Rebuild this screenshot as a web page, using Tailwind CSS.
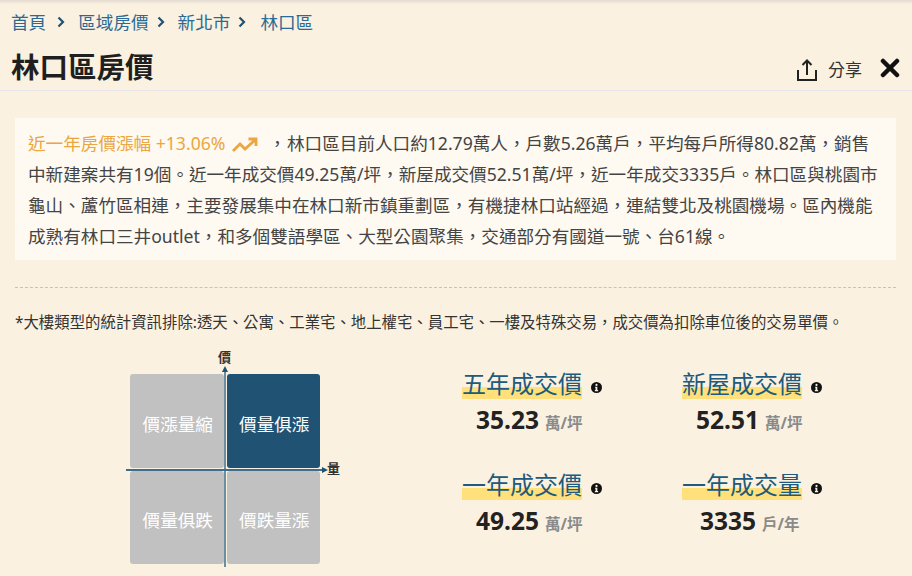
<!DOCTYPE html>
<html lang="zh-Hant">

<head>
    <meta charset="UTF-8">
    <title>林口區房價</title>
    <script src="https://cdn.jsdelivr.net/npm/@tailwindcss/browser@4"></script>
</head>

<body class="bg-[#fbf1e0] font-['Noto_Sans','Noto_Sans_CJK_TC',sans-serif] overflow-hidden">
    <div class="h-[576px] w-[912px] overflow-hidden">
        <!-- top shadow -->
        <div class="h-[4px] bg-gradient-to-b from-[#e2dbd1] to-[#fbf1e0]"></div>

        <!-- breadcrumb -->
        <nav class="flex items-center h-[36px] pl-[11px] text-[17.6px] text-[#2b6a94]">
            <span>首頁</span>
            <svg class="w-[8px] h-[12px] ml-[11px] mr-[13px]" viewBox="0 0 8 12" fill="none" stroke="#1f5273" stroke-width="2.2"><path d="M1.5 1.5 6 6l-4.500 4.500" /></svg>
            <span>區域房價</span>
            <svg class="w-[8px] h-[12px] ml-[8px] mr-[13px]" viewBox="0 0 8 12" fill="none" stroke="#1f5273" stroke-width="2.2"><path d="M1.5 1.5 6 6l-4.500 4.500" /></svg>
            <span>新北市</span>
            <svg class="w-[8px] h-[12px] ml-[8px] mr-[14px]" viewBox="0 0 8 12" fill="none" stroke="#1f5273" stroke-width="2.2"><path d="M1.5 1.5 6 6l-4.500 4.500" /></svg>
            <span>林口區</span>
        </nav>

        <!-- title bar -->
        <header class="flex items-center justify-between h-[51px] pt-[5px] pl-[11px] pr-[12px] border-b border-[#e8e6ec]">
            <h1 class="text-[28.500px] font-bold text-[#1f1f1f]">林口區房價</h1>
            <div class="flex items-center">
                <svg class="w-[22px] h-[24px] mt-[4px]" viewBox="0 0 22 24" fill="none" stroke="#222" stroke-width="2"><path d="M2 12v10h18V12M11 17V2.500M6.500 7 11 2.500 15.500 7" /></svg>
                <span class="ml-[10px] mt-[5px] text-[17px] text-[#333]">分享</span>
                <svg class="w-[20px] h-[20px] ml-[18px]" viewBox="0 0 20 20" fill="none" stroke="#111" stroke-width="4.500" stroke-linecap="round"><path d="M3 3l14 14M17 3 3 17" /></svg>
            </div>
        </header>

        <!-- summary -->
        <section class="mt-[27px] mx-[15px] w-[881px] h-[142px] bg-[#fef9f1] px-[13px] py-[10px] text-[17.6px] leading-[31px] text-[#444]">
            <p><span class="text-[#eaa640]">近一年房價漲幅 +13.06%<svg class="inline-block w-[26px] h-[16px] ml-[7px] mb-[1px] align-middle" viewBox="0 0 26 16" fill="none" stroke="#eaa640" stroke-width="2.800"><path d="M1 14l7-7 5 5 10-9M16.500 2H24v7" /></svg></span><span class="ml-[10px] mr-[1px]">，</span>林口區目前人口約12.79萬人，戶數5.26萬戶，平均每戶所得80.82萬，銷售中新建案共有19個。近一年成交價49.25萬/坪，新屋成交價52.51萬/坪，近一年成交3335戶。林口區與桃園市龜山、蘆竹區相連，主要發展集中在林口新市鎮重劃區，有機捷林口站經過，連結雙北及桃園機場。區內機能成熟有林口三井outlet，和多個雙語學區、大型公園聚集，交通部分有國道一號、台61線。</p>
        </section>

        <hr class="mt-[27px] mx-[15px] w-[881px] border-0 border-t border-dashed border-[#c9c2b6]">

        <p class="mt-[25px] pl-[15px] text-[15.400px] leading-[20px] text-[#333]">*大樓類型的統計資訊排除:透天、公寓、工業宅、地上權宅、員工宅、一樓及特殊交易，成交價為扣除車位後的交易單價。</p>

        <div class="flex mt-[14px]">
            <!-- quadrant chart -->
            <div class="relative w-[400px] h-[230px] shrink-0">
                <span class="absolute left-[218px] top-[2px] text-[13px] leading-[16px] font-bold text-[#333]">價</span>
                <span class="absolute left-[327px] top-[113px] text-[13px] leading-[16px] font-bold text-[#333]">量</span>
                <div class="absolute left-[130px] top-[27px] grid grid-cols-[93.500px_93.500px] grid-rows-[93.500px_93.500px] gap-[3px] text-[17.6px] text-white">
                    <div class="flex items-center justify-center pt-[7px] pl-[2px] rounded-[3px] bg-[#c1c1c1]">價漲量縮</div>
                    <div class="flex items-center justify-center pt-[7px] pl-[2px] rounded-[3px] bg-[#205274]">價量俱漲</div>
                    <div class="flex items-center justify-center pt-[6px] pl-[2px] rounded-[3px] bg-[#c1c1c1]">價量俱跌</div>
                    <div class="flex items-center justify-center pt-[6px] pl-[2px] rounded-[3px] bg-[#c1c1c1]">價跌量漲</div>
                </div>
                <!-- axes -->
                <div class="absolute left-[224px] top-[22px] w-[2px] h-[198px] bg-[#6c8ea5]"></div>
                <div class="absolute left-[222px] top-[19px] w-0 h-0 border-x-[3px] border-x-transparent border-b-[6px] border-b-[#205274]"></div>
                <div class="absolute left-[126px] top-[122px] w-[198px] h-[2px] bg-[#3f6d8c]"></div>
                <div class="absolute left-[322px] top-[120px] w-0 h-0 border-y-[3px] border-y-transparent border-l-[6px] border-l-[#205274]"></div>
            </div>

            <!-- stats -->
            <div class="grid grid-cols-[220px_220px] grid-rows-[101px_101px] ml-[62px] mt-[22px]">
                <div>
                    <div class="flex items-center">
                        <span class="text-[24px] leading-[30px] text-[#205a7c] bg-gradient-to-b from-transparent from-[60%] to-[#ffe07a] to-[60%]">五年成交價</span>
                        <svg class="w-[11px] h-[11px] ml-[9px] mt-[7px]" viewBox="0 0 16 16"><circle cx="8" cy="8" r="8" fill="#111" /><circle cx="8" cy="4.300" r="1.600" fill="#fbf1e0" /><path d="M6 6.800h3.200v5h1.200v1.600H5.600v-1.600h1V8.400H6z" fill="#fbf1e0" /></svg>
                    </div>
                    <div class="flex items-baseline mt-[4px] pl-[14px]">
                        <span class="text-[24.500px] leading-[34px] font-bold text-[#222]">35.23</span>
                        <span class="ml-[6px] text-[15.500px] font-bold text-[#8a8a8a]">萬/坪</span>
                    </div>
                </div>
                <div>
                    <div class="flex items-center">
                        <span class="text-[24px] leading-[30px] text-[#205a7c] bg-gradient-to-b from-transparent from-[60%] to-[#ffe07a] to-[60%]">新屋成交價</span>
                        <svg class="w-[11px] h-[11px] ml-[9px] mt-[7px]" viewBox="0 0 16 16"><circle cx="8" cy="8" r="8" fill="#111" /><circle cx="8" cy="4.300" r="1.600" fill="#fbf1e0" /><path d="M6 6.800h3.200v5h1.200v1.600H5.600v-1.600h1V8.400H6z" fill="#fbf1e0" /></svg>
                    </div>
                    <div class="flex items-baseline mt-[4px] pl-[14px]">
                        <span class="text-[24.500px] leading-[34px] font-bold text-[#222]">52.51</span>
                        <span class="ml-[6px] text-[15.500px] font-bold text-[#8a8a8a]">萬/坪</span>
                    </div>
                </div>
                <div>
                    <div class="flex items-center">
                        <span class="text-[24px] leading-[30px] text-[#205a7c] bg-gradient-to-b from-transparent from-[60%] to-[#ffe07a] to-[60%]">一年成交價</span>
                        <svg class="w-[11px] h-[11px] ml-[9px] mt-[7px]" viewBox="0 0 16 16"><circle cx="8" cy="8" r="8" fill="#111" /><circle cx="8" cy="4.300" r="1.600" fill="#fbf1e0" /><path d="M6 6.800h3.200v5h1.200v1.600H5.600v-1.600h1V8.400H6z" fill="#fbf1e0" /></svg>
                    </div>
                    <div class="flex items-baseline mt-[4px] pl-[14px]">
                        <span class="text-[24.500px] leading-[34px] font-bold text-[#222]">49.25</span>
                        <span class="ml-[6px] text-[15.500px] font-bold text-[#8a8a8a]">萬/坪</span>
                    </div>
                </div>
                <div>
                    <div class="flex items-center">
                        <span class="text-[24px] leading-[30px] text-[#205a7c] bg-gradient-to-b from-transparent from-[60%] to-[#ffe07a] to-[60%]">一年成交量</span>
                        <svg class="w-[11px] h-[11px] ml-[9px] mt-[7px]" viewBox="0 0 16 16"><circle cx="8" cy="8" r="8" fill="#111" /><circle cx="8" cy="4.300" r="1.600" fill="#fbf1e0" /><path d="M6 6.800h3.200v5h1.200v1.600H5.600v-1.600h1V8.400H6z" fill="#fbf1e0" /></svg>
                    </div>
                    <div class="flex items-baseline mt-[4px] pl-[18px]">
                        <span class="text-[24.500px] leading-[34px] font-bold text-[#222]">3335</span>
                        <span class="ml-[6px] text-[15.500px] font-bold text-[#8a8a8a]">戶/年</span>
                    </div>
                </div>
            </div>
        </div>
    </div>
</body>

</html>
